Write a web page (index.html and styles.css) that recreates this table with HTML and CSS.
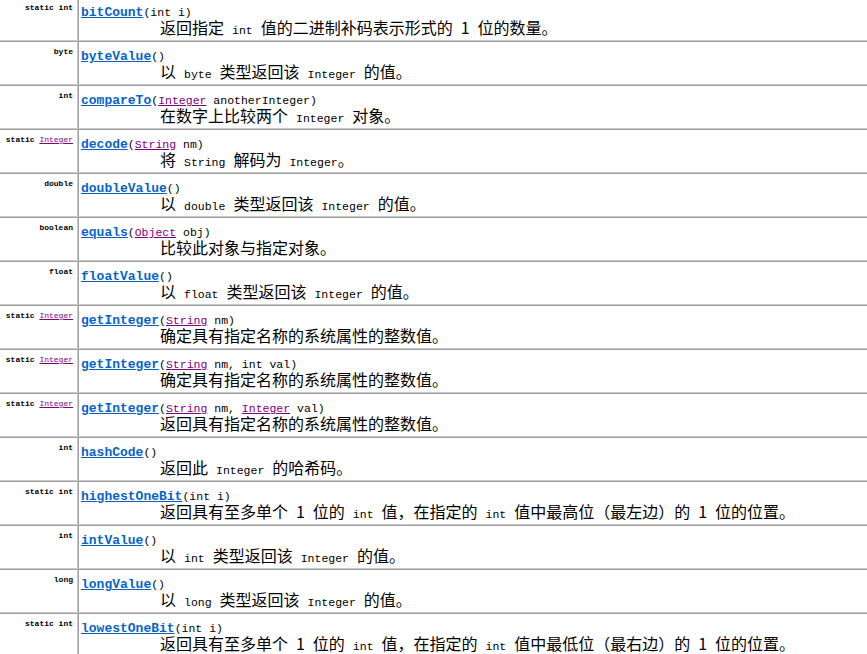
FILE: index.html
```html
<!DOCTYPE html>
<html lang="zh-CN">
<head>
<meta charset="utf-8">
<title>Integer 方法摘要</title>
<link rel="stylesheet" href="styles.css">
</head>
<body>
<table class="summary">
  <tr>
    <td class="type"><code>static int</code></td>
    <td class="method"><div class="sig"><a class="name" href="#">bitCount</a>(int&nbsp;i)</div><div class="desc">返回指定 <code>int</code> 值的二进制补码表示形式的 1 位的数量。</div></td>
  </tr>
  <tr>
    <td class="type"><code>byte</code></td>
    <td class="method"><div class="sig"><a class="name" href="#">byteValue</a>()</div><div class="desc">以 <code>byte</code> 类型返回该 <code>Integer</code> 的值。</div></td>
  </tr>
  <tr>
    <td class="type"><code>int</code></td>
    <td class="method"><div class="sig"><a class="name" href="#">compareTo</a>(<a class="ref" href="#">Integer</a>&nbsp;anotherInteger)</div><div class="desc">在数字上比较两个 <code>Integer</code> 对象。</div></td>
  </tr>
  <tr>
    <td class="type"><code>static <a class="ref" href="#">Integer</a></code></td>
    <td class="method"><div class="sig"><a class="name" href="#">decode</a>(<a class="ref" href="#">String</a>&nbsp;nm)</div><div class="desc">将 <code>String</code> 解码为 <code>Integer</code>。</div></td>
  </tr>
  <tr>
    <td class="type"><code>double</code></td>
    <td class="method"><div class="sig"><a class="name" href="#">doubleValue</a>()</div><div class="desc">以 <code>double</code> 类型返回该 <code>Integer</code> 的值。</div></td>
  </tr>
  <tr>
    <td class="type"><code>boolean</code></td>
    <td class="method"><div class="sig"><a class="name" href="#">equals</a>(<a class="ref" href="#">Object</a>&nbsp;obj)</div><div class="desc">比较此对象与指定对象。</div></td>
  </tr>
  <tr>
    <td class="type"><code>float</code></td>
    <td class="method"><div class="sig"><a class="name" href="#">floatValue</a>()</div><div class="desc">以 <code>float</code> 类型返回该 <code>Integer</code> 的值。</div></td>
  </tr>
  <tr>
    <td class="type"><code>static <a class="ref" href="#">Integer</a></code></td>
    <td class="method"><div class="sig"><a class="name" href="#">getInteger</a>(<a class="ref" href="#">String</a>&nbsp;nm)</div><div class="desc">确定具有指定名称的系统属性的整数值。</div></td>
  </tr>
  <tr>
    <td class="type"><code>static <a class="ref" href="#">Integer</a></code></td>
    <td class="method"><div class="sig"><a class="name" href="#">getInteger</a>(<a class="ref" href="#">String</a>&nbsp;nm, int&nbsp;val)</div><div class="desc">确定具有指定名称的系统属性的整数值。</div></td>
  </tr>
  <tr>
    <td class="type"><code>static <a class="ref" href="#">Integer</a></code></td>
    <td class="method"><div class="sig"><a class="name" href="#">getInteger</a>(<a class="ref" href="#">String</a>&nbsp;nm, <a class="ref" href="#">Integer</a>&nbsp;val)</div><div class="desc">返回具有指定名称的系统属性的整数值。</div></td>
  </tr>
  <tr>
    <td class="type"><code>int</code></td>
    <td class="method"><div class="sig"><a class="name" href="#">hashCode</a>()</div><div class="desc">返回此 <code>Integer</code> 的哈希码。</div></td>
  </tr>
  <tr>
    <td class="type"><code>static int</code></td>
    <td class="method"><div class="sig"><a class="name" href="#">highestOneBit</a>(int&nbsp;i)</div><div class="desc">返回具有至多单个 1 位的 <code>int</code> 值，在指定的 <code>int</code> 值中最高位（最左边）的 1 位的位置。</div></td>
  </tr>
  <tr>
    <td class="type"><code>int</code></td>
    <td class="method"><div class="sig"><a class="name" href="#">intValue</a>()</div><div class="desc">以 <code>int</code> 类型返回该 <code>Integer</code> 的值。</div></td>
  </tr>
  <tr>
    <td class="type"><code>long</code></td>
    <td class="method"><div class="sig"><a class="name" href="#">longValue</a>()</div><div class="desc">以 <code>long</code> 类型返回该 <code>Integer</code> 的值。</div></td>
  </tr>
  <tr>
    <td class="type"><code>static int</code></td>
    <td class="method"><div class="sig"><a class="name" href="#">lowestOneBit</a>(int&nbsp;i)</div><div class="desc">返回具有至多单个 1 位的 <code>int</code> 值，在指定的 <code>int</code> 值中最低位（最右边）的 1 位的位置。</div></td>
  </tr>
</table>
</body>
</html>
```

FILE: styles.css
```css
html, body {
  margin: 0;
  padding: 0;
  background: #ffffff;
  color: #000000;
}

body {
  font-family: "Noto Sans CJK SC", "Noto Sans", sans-serif;
  overflow: hidden;
}

.summary {
  width: 100%;
  border-collapse: separate;
  border-spacing: 0;
  margin-top: -3px;
}

.summary td {
  border-top: 1px solid #a0a0a0;
  border-bottom: 1px solid #c8c8c8;
  vertical-align: top;
  box-sizing: border-box;
}

.type {
  width: 78px;
  padding: 3px 4px 0 0;
  text-align: right;
  border-right: 1px solid #c8c8c8;
  line-height: 11px;
  font-size: 8px;
  white-space: nowrap;
}

.type code {
  font-family: "Liberation Mono", monospace;
  font-size: 8px;
  font-weight: bold;
  line-height: 11px;
  color: #000;
}

.type .ref {
  font-weight: normal;
}

.method {
  border-left: 1px solid #a0a0a0;
  padding: 5px 0 5px 2px;
}

.sig {
  font-family: "Liberation Mono", monospace;
  font-size: 11.5px;
  line-height: 16px;
  height: 14px;
  padding-top: 2px;
  white-space: nowrap;
}

.name {
  font-size: 13px;
  font-weight: bold;
  color: #0a62c8;
  text-decoration: underline;
}

.ref {
  color: #800080;
  text-decoration: underline;
}

.desc {
  padding-left: 79px;
  font-size: 16px;
  line-height: 16px;
  height: 16px;
  word-spacing: 4.4px;
  white-space: nowrap;
}

.desc code {
  font-family: "Liberation Mono", monospace;
  font-size: 11.5px;
  line-height: 10px;
  word-spacing: 0;
}
```
